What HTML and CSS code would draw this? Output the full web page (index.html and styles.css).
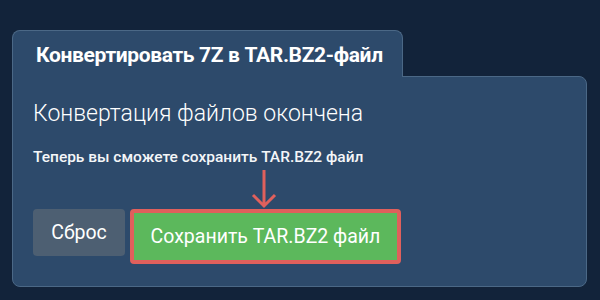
FILE: index.html
```html
<!DOCTYPE html>
<html lang="ru">

<head>
    <meta charset="UTF-8">
    <meta name="viewport" content="width=device-width, initial-scale=1.0">
    <title>Конвертировать 7Z в TAR.BZ2</title>
    <link rel="stylesheet" href="styles.css">
</head>

<body>

    <div class="converter">
        <div class="tab">Конвертировать 7Z в TAR.BZ2-файл</div>

        <div class="panel">
            <h2 class="status">Конвертация файлов окончена</h2>
            <p class="hint">Теперь вы сможете сохранить TAR.BZ2 файл</p>

            <div class="actions">
                <button class="btn btn-reset">Сброс</button>
                <button class="btn btn-save">
                    <!-- arrow pointing at the save button -->
                    <svg class="pointer" width="26" height="40" viewBox="0 0 26 40">
                        <path d="M13 1 L13 37 M2 26 L13 37 L24 26" fill="none" stroke="#e0605c" stroke-width="3"/>
                    </svg>
                    Сохранить TAR.BZ2 файл
                </button>
            </div>
        </div>
    </div>

</body>

</html>
```

FILE: styles.css
```css
body {
    background-color: #12233a;
    font-family: 'Roboto', sans-serif;
    margin: 0;
    padding: 0;
}

.converter {
    margin: 30px 13px 0 12px;
}

.tab {
    position: relative;
    z-index: 1;
    width: 391px;
    height: 47px;
    box-sizing: border-box;
    padding: 12px 0 0 23px;
    margin-bottom: -1px;
    background-color: #2d4a6b;
    border: 1px solid #4b6886;
    border-bottom: none;
    border-radius: 8px 8px 0 0;
    color: #ffffff;
    font-size: 21px;
    font-weight: bold;
    letter-spacing: -0.35px;
}

.panel {
    background-color: #2d4a6b;
    border: 1px solid #4b6886;
    border-radius: 0 8px 8px 8px;
    padding: 23px 20px 20px 20px;
    height: 211px;
    box-sizing: border-box;
}

.status {
    margin: 0;
    color: #ffffff;
    font-size: 23px;
    font-weight: 300;
}

.hint {
    margin: 21px 0 0 0;
    color: #f4f6f8;
    font-size: 15.5px;
    font-weight: 500;
}

.actions {
    display: flex;
    align-items: flex-start;
    gap: 5px;
    margin-top: 43px;
}

.btn {
    height: 47px;
    font-family: 'Roboto', sans-serif;
    font-size: 19.5px;
    color: #ffffff;
    border: none;
    border-radius: 4px;
    padding: 0;
}

.btn-reset {
    width: 92px;
    background-color: #4d5f72;
}

.btn-save {
    position: relative;
    box-sizing: content-box;
    width: 263px;
    background-color: #5cb85c;
    border: 4px solid #e0605c;
}

.pointer {
    position: absolute;
    top: -44px;
    left: 50%;
    margin-left: -15px;
}
```
